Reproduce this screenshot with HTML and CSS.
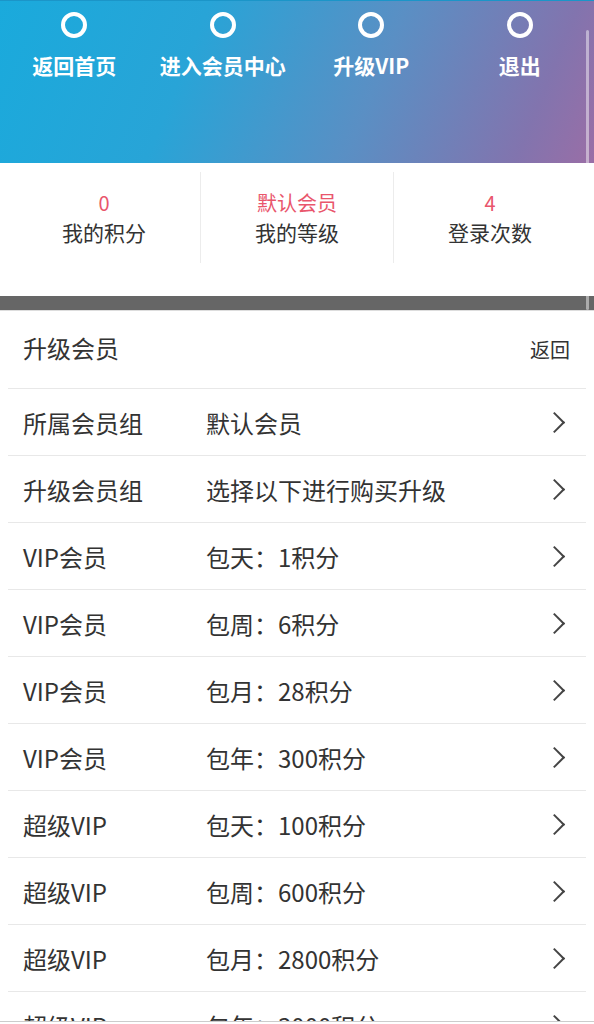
FILE: index.html
```html
<!DOCTYPE html>
<html lang="zh-CN">
<head>
  <meta charset="UTF-8">
  <meta name="viewport" content="width=device-width, initial-scale=1.0">
  <title>升级会员</title>
  <link rel="stylesheet" href="styles.css">
</head>
<body>
  <div class="header">
    <div class="nav">
      <a class="nav-item" href="#"><span class="ring"></span><span class="nav-label">返回首页</span></a>
      <a class="nav-item" href="#"><span class="ring"></span><span class="nav-label">进入会员中心</span></a>
      <a class="nav-item" href="#"><span class="ring"></span><span class="nav-label">升级VIP</span></a>
      <a class="nav-item" href="#"><span class="ring"></span><span class="nav-label">退出</span></a>
    </div>
  </div>

  <div class="stats">
    <div class="stat">
      <div class="stat-value">0</div>
      <div class="stat-label">我的积分</div>
    </div>
    <div class="stat">
      <div class="stat-value">默认会员</div>
      <div class="stat-label">我的等级</div>
    </div>
    <div class="stat">
      <div class="stat-value">4</div>
      <div class="stat-label">登录次数</div>
    </div>
  </div>

  <div class="bar"></div>

  <div class="list">
    <div class="list-head">
      <span class="list-title">升级会员</span>
      <a class="back" href="#">返回</a>
    </div>
    <div class="row"><span class="row-name">所属会员组</span><span class="row-value">默认会员</span><span class="chev"></span></div>
    <div class="row"><span class="row-name">升级会员组</span><span class="row-value">选择以下进行购买升级</span><span class="chev"></span></div>
    <div class="row"><span class="row-name">VIP会员</span><span class="row-value">包天：1积分</span><span class="chev"></span></div>
    <div class="row"><span class="row-name">VIP会员</span><span class="row-value">包周：6积分</span><span class="chev"></span></div>
    <div class="row"><span class="row-name">VIP会员</span><span class="row-value">包月：28积分</span><span class="chev"></span></div>
    <div class="row"><span class="row-name">VIP会员</span><span class="row-value">包年：300积分</span><span class="chev"></span></div>
    <div class="row"><span class="row-name">超级VIP</span><span class="row-value">包天：100积分</span><span class="chev"></span></div>
    <div class="row"><span class="row-name">超级VIP</span><span class="row-value">包周：600积分</span><span class="chev"></span></div>
    <div class="row"><span class="row-name">超级VIP</span><span class="row-value">包月：2800积分</span><span class="chev"></span></div>
    <div class="row"><span class="row-name">超级VIP</span><span class="row-value">包年：3000积分</span><span class="chev"></span></div>
  </div>

  <div class="scrollbar"></div>
  <div class="footer"></div>
</body>
</html>
```

FILE: styles.css
```css
body {
  margin: 0;
  padding: 0;
  background: #fff;
  font-family: "Noto Sans CJK SC", "Noto Sans", sans-serif;
  color: #333;
}

a {
  text-decoration: none;
  color: inherit;
}

.header {
  height: 162px;
  border-top: 1px solid #1b95c8;
  background: linear-gradient(112deg, #1aaadc 0%, #28a4d7 32%, #5a8fc4 62%, #8274ae 88%, #9a6ea6 100%);
}

.nav {
  display: grid;
  grid-template-columns: repeat(4, 1fr);
  padding-top: 11px;
}

.nav-item {
  display: flex;
  flex-direction: column;
  align-items: center;
  color: #fff;
}

.ring {
  width: 18px;
  height: 18px;
  border: 4px solid #fff;
  border-radius: 50%;
}

.nav-label {
  margin-top: 12px;
  font-size: 21px;
  line-height: 30px;
  font-weight: bold;
}

.stats {
  display: flex;
  height: 133px;
  padding: 9px 8px 0;
  box-sizing: border-box;
}

.stat {
  flex: 1;
  height: 91px;
  padding-top: 17px;
  box-sizing: border-box;
  text-align: center;
  border-left: 1px solid #ececec;
}

.stat:first-child {
  border-left: none;
}

.stat-value {
  font-size: 20px;
  line-height: 28px;
  color: #e9566c;
}

.stat-label {
  font-size: 21px;
  line-height: 30px;
  color: #333;
}

.bar {
  height: 14px;
  background: #666;
  border-bottom: 1px solid #ddd;
}

.list {
  margin: 0 8px;
}

.list-head {
  display: flex;
  align-items: center;
  justify-content: space-between;
  height: 77px;
  padding: 0 16px 0 15px;
  border-bottom: 1px solid #e8e8e8;
}

.list-title {
  font-size: 24px;
  margin-top: -4px;
}

.back {
  font-size: 20px;
  color: #333;
}

.row {
  display: flex;
  align-items: center;
  height: 66px;
  padding: 0 20px 0 15px;
  border-bottom: 1px solid #e8e8e8;
  font-size: 24px;
}

.row-name {
  width: 183px;
  flex-shrink: 0;
}

.row-value {
  flex: 1;
}

.chev {
  width: 13px;
  height: 13px;
  border-top: 2px solid #444;
  border-right: 2px solid #444;
  transform: rotate(45deg);
  margin-right: 4px;
}

.scrollbar {
  position: fixed;
  top: 30px;
  right: 5px;
  width: 3px;
  height: 280px;
  border-radius: 2px;
  background: rgba(255, 255, 255, 0.45);
}

.footer {
  position: fixed;
  left: 0;
  right: 0;
  bottom: 0;
  height: 2px;
  background: #fff;
  border-top: 1px solid #ccc;
}
```
